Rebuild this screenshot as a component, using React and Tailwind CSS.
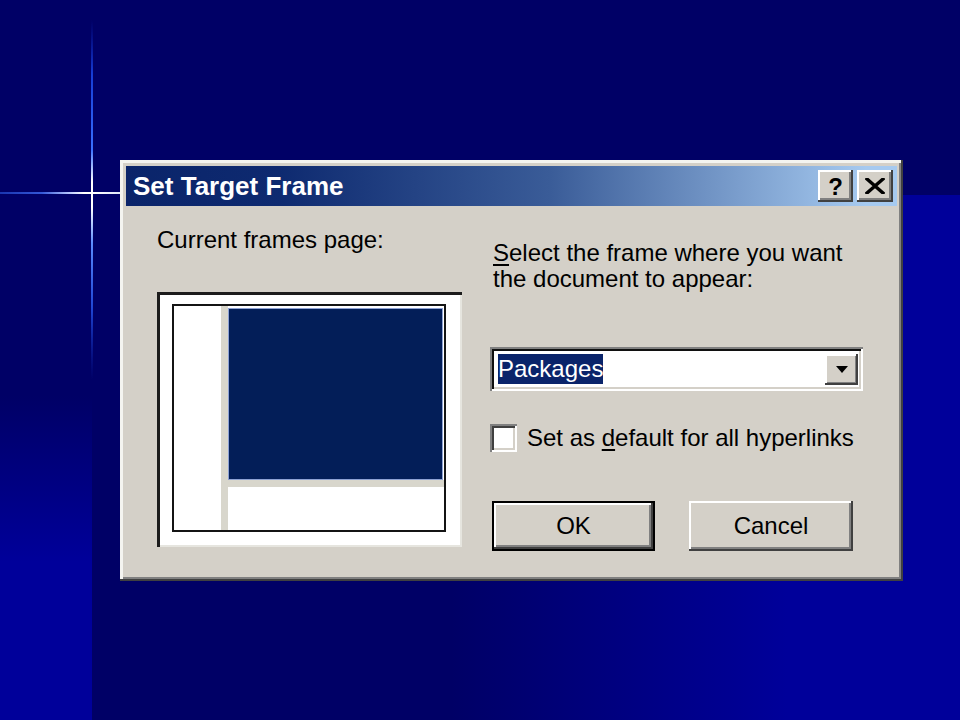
import React from "react";

function Star() {
  return (
    <svg
      className="absolute left-0 top-0 pointer-events-none"
      width="140"
      height="400"
      viewBox="0 0 140 400"
      aria-hidden="true"
    >
      <defs>
        <linearGradient id="hg" x1="0" y1="0" x2="140" y2="0" gradientUnits="userSpaceOnUse">
          <stop offset="0" stopColor="#1a36b0" />
          <stop offset="0.3" stopColor="#3458d8" />
          <stop offset="0.5" stopColor="#b8c8ff" />
          <stop offset="0.6" stopColor="#ffffff" />
          <stop offset="0.66" stopColor="#ffffff" />
          <stop offset="1" stopColor="#c8d4f4" />
        </linearGradient>
        <linearGradient id="vg" x1="0" y1="20" x2="0" y2="380" gradientUnits="userSpaceOnUse">
          <stop offset="0" stopColor="#1030d0" stopOpacity="0" />
          <stop offset="0.15" stopColor="#1c4cf0" stopOpacity="0.8" />
          <stop offset="0.36" stopColor="#3a70ff" />
          <stop offset="0.45" stopColor="#ffffff" />
          <stop offset="0.52" stopColor="#ffffff" />
          <stop offset="0.62" stopColor="#5c8cff" />
          <stop offset="0.8" stopColor="#2858f0" stopOpacity="0.8" />
          <stop offset="1" stopColor="#1030c0" stopOpacity="0" />
        </linearGradient>
      </defs>
      <rect x="0" y="192" width="140" height="2" fill="url(#hg)" />
      <rect x="91" y="20" width="2" height="360" fill="url(#vg)" />
    </svg>
  );
}

function TitleButton({ children }) {
  return (
    <div className="w-[35px] h-[32px] bg-[#d4d0c8] flex items-center justify-center shadow-[inset_-2px_-2px_0_#404040,inset_2px_2px_0_#ffffff,inset_-4px_-4px_0_#808080]">
      {children}
    </div>
  );
}

function Dialog() {
  return (
    <div className="relative w-[783px] h-[421px] bg-[#d4d0c8] p-[6px] shadow-[inset_-2px_-2px_0_#404040,inset_3px_3px_0_#f4f4f0,inset_-4px_-4px_0_#808080]">
      {/* Title bar */}
      <div className="h-[40px] flex items-center pl-[7px] pr-[4px] bg-[linear-gradient(to_right,#0a246a_0%,#0e2a70_20%,#3a5c98_55%,#a6caf0_96%)]">
        <span className="text-white font-bold text-[26px] leading-[26px] whitespace-nowrap">
          Set Target Frame
        </span>
        <div className="ml-auto flex gap-[4px]">
          <TitleButton>
            <span className="text-black font-bold text-[24px] leading-none mt-[1px]">?</span>
          </TitleButton>
          <div className="w-[36px] h-[32px] bg-[#d4d0c8] flex items-center justify-center shadow-[inset_-2px_-2px_0_#404040,inset_2px_2px_0_#ffffff,inset_-4px_-4px_0_#808080]">
            <svg width="20" height="16" viewBox="0 0 20 16" aria-hidden="true">
              <path d="M2 1 L18 15 M18 1 L2 15" stroke="#000" strokeWidth="3.4" strokeLinecap="square" />
            </svg>
          </div>
        </div>
      </div>

      {/* Body */}
      <div className="flex h-[369px] pl-[31px] text-black">
        {/* Left column */}
        <div className="w-[305px] flex flex-col">
          <div className="mt-[21px] text-[24px] leading-[26px] whitespace-nowrap">Current frames page:</div>
          <div className="mt-[39px] w-[305px] h-[255px] bg-white pt-[12px] pr-[16px] pb-[15px] pl-[15px] shadow-[inset_3px_3px_0_#1c1c1c,inset_-2px_-2px_0_#e6e5df]">
            <div className="w-full h-full border-2 border-[#141414] flex bg-white">
              <div className="w-[47px] h-full bg-white" />
              <div className="w-[7px] h-full bg-[#d8d6cc]" />
              <div className="flex-1 flex flex-col">
                <div className="h-[174px] pt-[2px] pr-[1px] bg-white">
                  <div className="w-full h-full bg-[#031e58] border border-[#8ea2d4]" />
                </div>
                <div className="h-[7px] bg-[#d8d6cc]" />
                <div className="flex-1 bg-white" />
              </div>
            </div>
          </div>
        </div>

        {/* Right column */}
        <div className="ml-[28px] w-[373px] flex flex-col">
          <div className="mt-[34px] pl-[3px] text-[24px] leading-[26px] whitespace-nowrap">
            <span className="underline underline-offset-[3px]">S</span>elect the frame where you want
            <br />
            the document to appear:
          </div>

          <div className="mt-[55px] h-[44px] w-[373px] bg-white flex items-center pl-[8px] pr-[5px] shadow-[inset_2px_2px_0_#808080,inset_-2px_-2px_0_#ffffff,inset_4px_4px_0_#101010,inset_-4px_-4px_0_#d4d0c8]">
            <span className="bg-[#0a246a] text-white text-[24px] leading-[30px] h-[30px] whitespace-nowrap">
              Packages
            </span>
            <div className="ml-auto w-[33px] h-[31px] bg-[#d4d0c8] flex items-center justify-center shadow-[inset_-2px_-2px_0_#404040,inset_2px_2px_0_#ffffff,inset_-3px_-3px_0_#808080]">
              <svg width="12" height="7" viewBox="0 0 12 7" aria-hidden="true">
                <path d="M0 0 H12 L6 7 Z" fill="#000" />
              </svg>
            </div>
          </div>

          <div className="mt-[33px] h-[28px] flex items-center">
            <div className="w-[27px] h-[28px] bg-white shadow-[inset_2px_2px_0_#808080,inset_-2px_-2px_0_#ffffff,inset_4px_4px_0_#404040,inset_-4px_-4px_0_#d4d0c8]" />
            <span className="ml-[10px] text-[24px] leading-[28px] whitespace-nowrap">
              Set as <span className="underline underline-offset-[3px]">d</span>efault for all hyperlinks
            </span>
          </div>

          <div className="mt-[49px] pl-[2px] flex gap-[34px]">
            <div className="w-[163px] h-[50px] border-2 border-black bg-[#d4d0c8] flex items-center justify-center text-[24px] leading-none shadow-[inset_-2px_-2px_0_#404040,inset_2px_2px_0_#ffffff,inset_-4px_-4px_0_#808080]">
              OK
            </div>
            <div className="w-[164px] h-[50px] bg-[#d4d0c8] flex items-center justify-center text-[24px] leading-none shadow-[inset_-2px_-2px_0_#404040,inset_2px_2px_0_#ffffff,inset_-4px_-4px_0_#808080]">
              Cancel
            </div>
          </div>
        </div>
      </div>
    </div>
  );
}

export default function App() {
  return (
    <div className="relative w-[960px] h-[720px] overflow-hidden pt-[160px] pl-[120px] [font-family:'Liberation_Sans',Arial,sans-serif] [background:linear-gradient(to_bottom,#000066_55%,#00009a_78%)_0_0/92px_100%_no-repeat,linear-gradient(#000066,#000066)_0_0/100%_195px_no-repeat,linear-gradient(to_right,#000066_47%,#00009a_82%)]">
      <Star />
      <Dialog />
    </div>
  );
}
